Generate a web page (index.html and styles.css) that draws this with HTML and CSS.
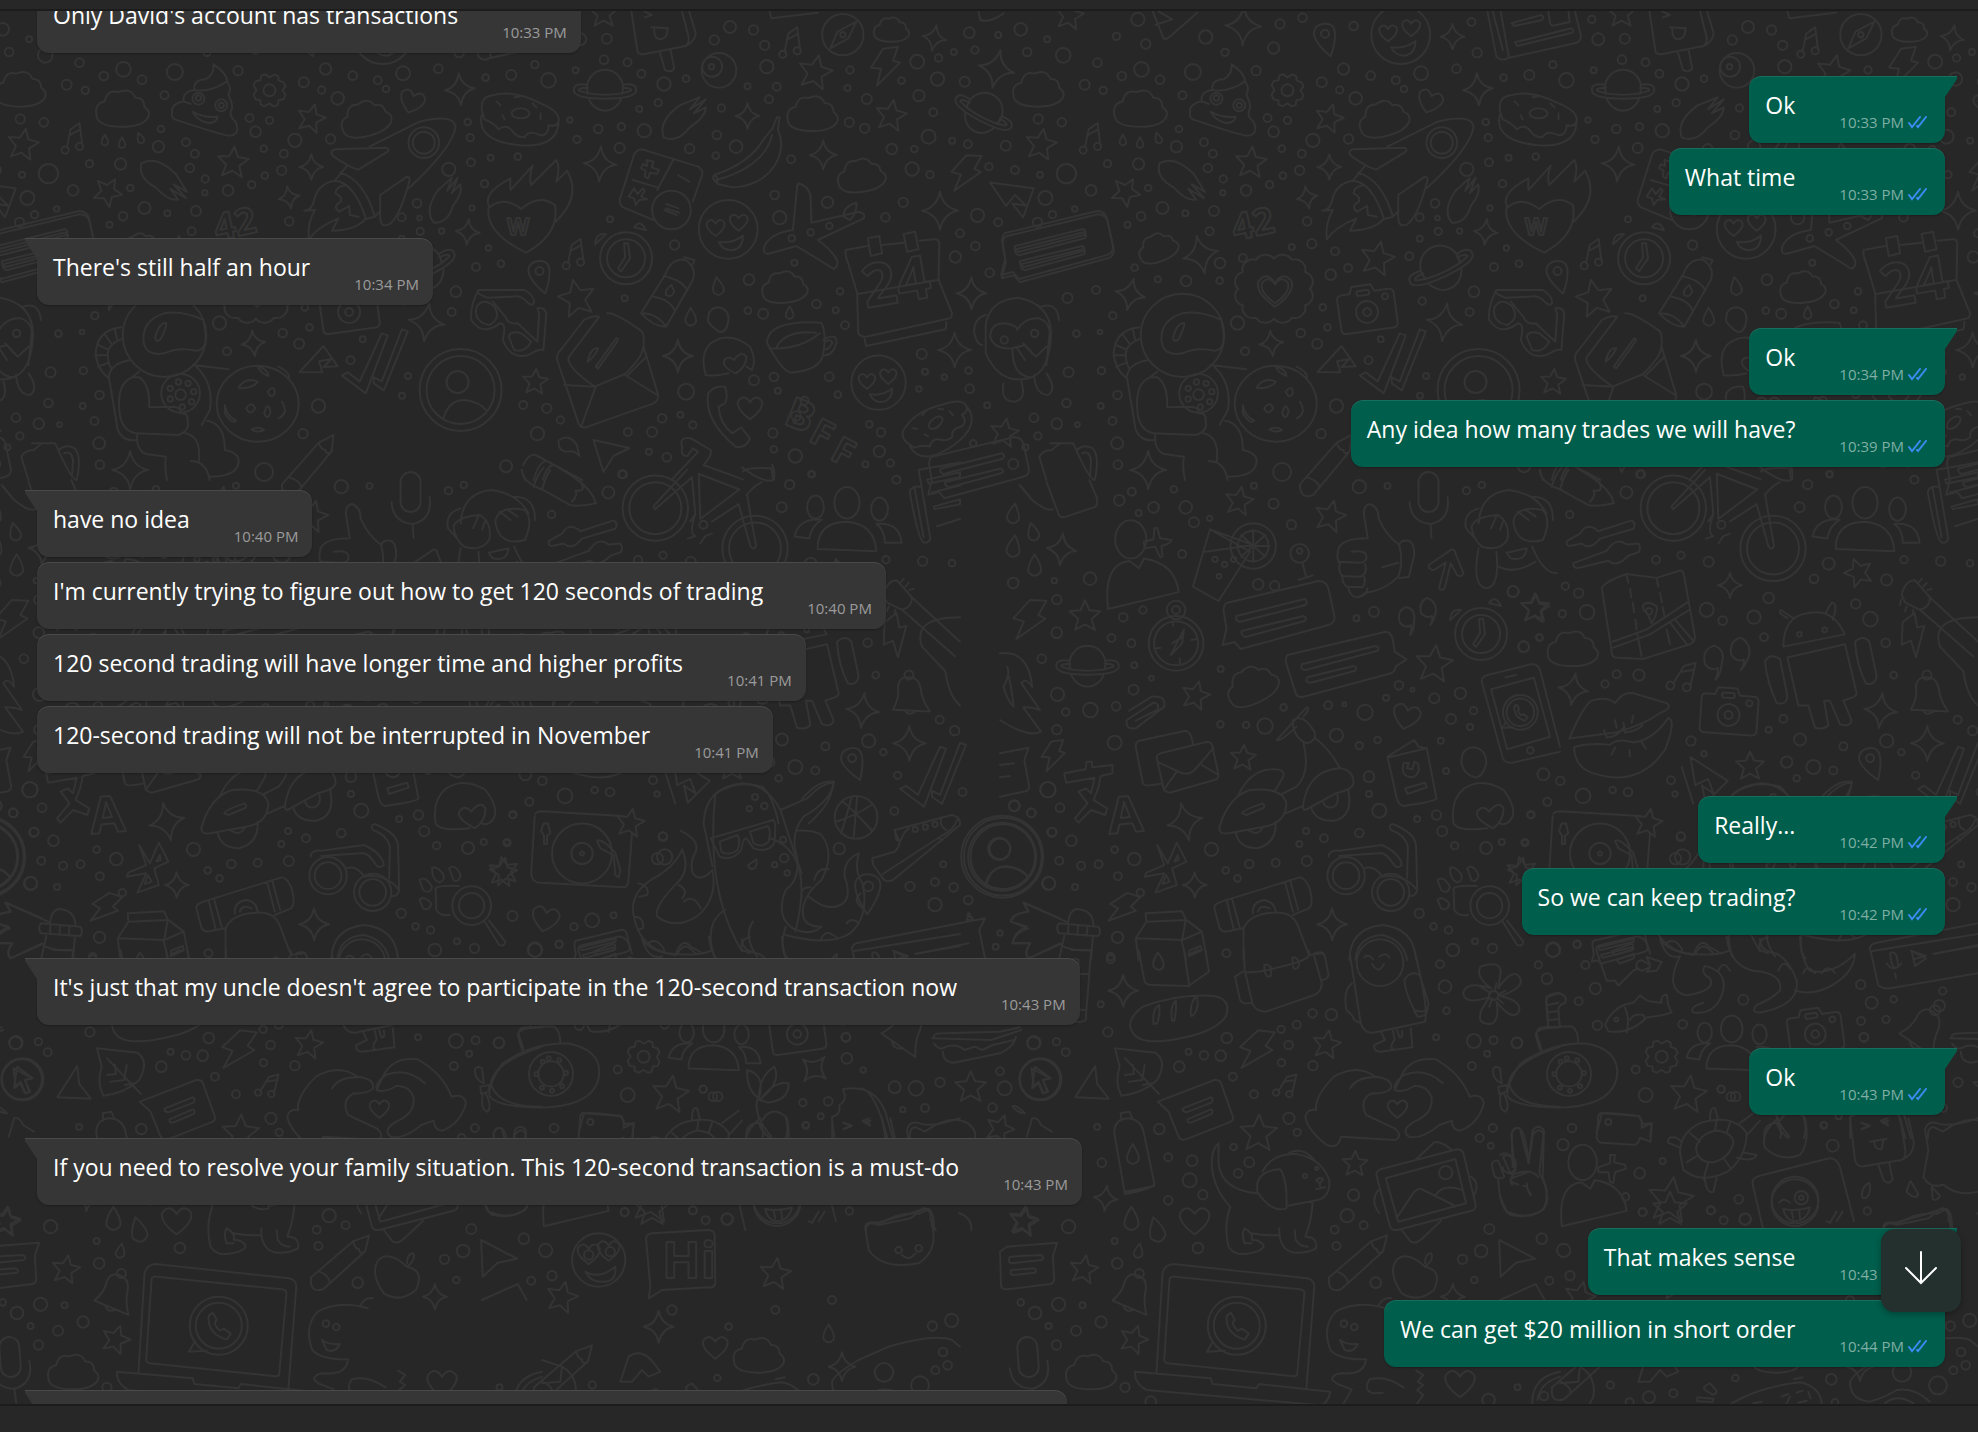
FILE: index.html
```html
<!doctype html>

<html lang="en">
<head>
    <meta charset="utf-8">
    <title>Chat</title>
    <link rel="stylesheet" href="styles.css">
</head>

<body>
    <header class="bar bar-top"></header>

    <main class="chat">
        <svg class="wallpaper" aria-hidden="true">
            <defs>
                <path id="star" d="M0-14L4-5L14-4L6 3L9 13L0 8L-9 13L-6 3L-14-4L-4-5Z"/>
                <path id="sparkle" d="M0-16Q2-3 15 0Q3 2 0 16Q-2 3-15 0Q-3-2 0-16Z"/>
                <path id="cloud" d="M-24 8Q-28-6-17-8Q-14-20-4-17Q8-22 12-12Q21-12 21-3Q28 2 24 8Q18 16 0 16Q-20 16-24 8Z"/>
                <path id="heart" d="M0 12Q-14 2-12-6Q-6-14 0-5Q6-14 12-6Q14 2 0 12Z"/>
                <path id="bolt" d="M-2-18L13-20L8-6L15-4L-8 19L-4 2L-14 1Z"/>
                <path id="drop" d="M0-9Q-7 2-5 6Q0 12 5 6Q7 2 0-9Z"/>
                <g id="note"><path d="M-6 10L-2-10L8-17L11 7M-2-4L9-10"/><circle cx="-8" cy="13" r="4"/><circle cx="8" cy="9" r="4"/></g>
                <g id="pin"><path d="M4 18Q-12 2-11-7Q-9-15 0-15Q10-15 10-5Q10 4 4 18Z"/><circle cy="-5" r="4"/></g>
                <g id="planet"><path d="M-17 3A18 18 0 1 1 17 3M-16 9Q-10 20 0 20Q10 20 16 9M-18-6Q-33-8-31 1Q-28 8 0 8Q28 8 31 1Q33-8 18-6M-17-3Q-27-3-26 0Q-16 4 0 4Q16 4 26 0Q27-3 17-3"/></g>
                <g id="gear"><path d="M-4-16L0-13L5-16L9-14L9-10L14-8L16-4L13 0L16 5L14 9L9 10L8 15L4 16L0 13L-5 16L-9 14L-9 10L-14 9L-16 4L-13 0L-16-5L-14-9L-9-10L-8-15Z"/><circle r="6"/></g>
                <g id="camera"><path d="M-28-14Q-28-18-23-18L-15-18L-12-25L7-25L10-18L24-18Q29-18 29-13L29 16Q29 21 24 21L-23 21Q-28 21-28 16ZM-7-20L4-20Q6-17 4-15L-7-15Q-9-18-7-20Z"/><circle cy="2" r="11"/><circle cy="2" r="4"/><circle cx="20" cy="-11" r="3"/></g>
                <g id="bell"><path d="M-20 8Q-8-2-6-14Q0-26 12-18Q20-14 16 2Q15 12 18 24ZM-8 13Q-6 22 4 18"/><circle cx="10" cy="-22" r="5"/></g>
                <g id="people"><ellipse cy="-20" rx="12" ry="15"/><ellipse cx="-30" cy="-16" rx="8" ry="11"/><ellipse cx="31" cy="-14" rx="8" ry="11"/><path d="M-28 24Q-28-2 0-2Q26 0 28 26ZM-50 12Q-46-6-24-4Q-34 2-36 14ZM52 18Q50-2 28 0Q36 6 36 18Z"/></g>
                <g id="glove"><path d="M-22 20Q-28 4-6-12L14-20L4-8L20-18L8-4L20-10Q20 0 4 10Q-8 26-22 20Z"/></g>
                <g id="clock"><circle r="26"/><circle r="19"/><path d="M-2-15L2-15L4 0L-5 13L-8 10L-1-1ZM-31-14Q-30-26-20-24ZM8-31Q14-40 20-28Z"/></g>
                <g id="speech"><path d="M-52-22L40-44Q48-44 50-36L56-8Q56-2 50 0L-38 24L-44 17L-56 20L-52 4L-55-14Q-55-20-52-22ZM-42-9L26-26Q30-24 27-20L-39-3Q-44-5-42-9ZM-37 6L25-9Q29-7 26-4L-33 12Q-38 10-37 6Z"/></g>
                <g id="plane"><path d="M-22-14L22-12L14 18L2 5L16 6L4-4L-4 8Z"/></g>
                <g id="arrow"><path d="M-18-14L18-6L2 2L-8 18Z"/></g>
                <g id="ticks"><path d="M-32 12L-26 9L-14 18L8-30L14-28L-8 30ZM0 14L8 18L28-34L34-32L10 27L0 20Z"/></g>
                <g id="quotes"><path d="M-5 10Q-10 14-16 8Q-20-4-10-8Q0-6-2 6Q-2 16-6 20Q-4 14-5 10ZM16 1Q10 4 5-2Q2-13 11-17Q20-14 20-4Q18 6 14 10Q17 6 16 1Z"/></g>
                <g id="profile"><circle r="41"/><circle r="34"/><circle cx="-3" cy="-8" r="11"/><path d="M-17 28Q-12 10 4 10Q20 12 26 21"/></g>
                <g id="pencil"><path d="M-28 14L14-22L30-28L26-12L-16 26Q-30 30-28 14ZM-20 8Q-10 12-9 20M14-22Q16-14 20-14Q20-8 26-12"/></g>
                <g id="mic"><rect x="-10" y="-28" width="20" height="40" rx="10"/><path d="M-19 2Q-18 22 2 24L3 38M19-3Q22 20 2 24"/></g>
                <g id="love"><circle r="28"/><use href="#heart" transform="translate(-12 -2) scale(.7)"/><use href="#heart" transform="translate(10 -7) scale(.7)"/><path d="M-9 12Q4 14 14 6Q14 18 4 20Q-6 20-9 12Z"/></g>
                <g id="phone"><circle r="29"/><circle r="23"/><path d="M-24 16L-30 26L-12 25M-10-10Q-12 8 8 14L12 8L5 3L1 5Q-4 0-4-3L-2-6L-6-13Z"/></g>
                <g id="person"><ellipse cx="3" cy="-20" rx="13" ry="16"/><path d="M-16 38Q-20 0 2-2L10 4L14-4Q40 0 43 24Z"/></g>
                <g id="donut"><path d="M-38 0Q-42-16-28-18Q-8-24 20-10Q40-2 38 8Q36 14 28 12Q28 22 20 22Q8 16 4 24Q-4 24-8 18Q-14 10-22 16Q-26 10-36 6ZM-39 2Q-44 28 0 32Q36 34 38 10M-24-12L-20-8M-6-16L0-17M12-10L16-6M-18 2L-16 6M20 0L20 6"/><ellipse rx="9" ry="5"/></g>
                <g id="tick"><path d="M1 7L4 11L12 1M9 10L10 11L18 1"/></g>
                <g id="tile"></g>
            </defs>
            <use href="#tile" x="0"/>
            <use href="#tile" x="-1018"/>
            <use href="#tile" x="1018"/>
        </svg>

        <div class="messages">
            <div class="msg in"><p>Only David's account has transactions</p><time>10:33 PM</time></div>

            <div class="msg out tail"><p>Ok</p><time>10:33 PM</time><svg class="ticks"><use href="#tick"/></svg></div>
            <div class="msg out"><p>What time</p><time>10:33 PM</time><svg class="ticks"><use href="#tick"/></svg></div>

            <div class="msg in tail"><p>There's still half an hour</p><time>10:34 PM</time></div>

            <div class="msg out tail"><p>Ok</p><time>10:34 PM</time><svg class="ticks"><use href="#tick"/></svg></div>
            <div class="msg out"><p>Any idea how many trades we will have?</p><time>10:39 PM</time><svg class="ticks"><use href="#tick"/></svg></div>

            <div class="msg in tail"><p>have no idea</p><time>10:40 PM</time></div>
            <div class="msg in"><p>I'm currently trying to figure out how to get 120 seconds of trading</p><time>10:40 PM</time></div>
            <div class="msg in"><p>120 second trading will have longer time and higher profits</p><time>10:41 PM</time></div>
            <div class="msg in"><p>120-second trading will not be interrupted in November</p><time>10:41 PM</time></div>

            <div class="msg out tail"><p>Really...</p><time>10:42 PM</time><svg class="ticks"><use href="#tick"/></svg></div>
            <div class="msg out"><p>So we can keep trading?</p><time>10:42 PM</time><svg class="ticks"><use href="#tick"/></svg></div>

            <div class="msg in tail"><p>It's just that my uncle doesn't agree to participate in the 120-second transaction now</p><time>10:43 PM</time></div>

            <div class="msg out tail"><p>Ok</p><time>10:43 PM</time><svg class="ticks"><use href="#tick"/></svg></div>

            <div class="msg in tail"><p>If you need to resolve your family situation. This 120-second transaction is a must-do</p><time>10:43 PM</time></div>

            <div class="msg out tail"><p>That makes sense</p><time>10:43 PM</time><svg class="ticks"><use href="#tick"/></svg></div>
            <div class="msg out"><p>We can get $20 million in short order</p><time>10:44 PM</time><svg class="ticks"><use href="#tick"/></svg></div>

            <div class="msg in tail wide"></div>
        </div>

        <button class="to-bottom" type="button" aria-label="Scroll to bottom">
            <svg width="32" height="34" viewBox="0 0 32 34"><path d="M16 1V32M1 17L16 32L31 17"/></svg>
        </button>
    </main>

    <footer class="bar bar-bottom"></footer>

    <script src="wallpaper.js"></script>
</body>
</html>
```
FILE: styles.css
```css
* {
    box-sizing: border-box;
}
body {
    margin: 0;
    height: 100vh;
    display: flex;
    flex-direction: column;
    overflow: hidden;
    background: #272727;
    color: #fff;
    font-family: "Open Sans", "Noto Sans", sans-serif;
}
.bar {
    flex: none;
    background: #272727;
}
.bar-top {
    height: 11px;
    border-bottom: 2px solid #1c1c1c;
}
.bar-bottom {
    height: 28px;
    border-top: 2px solid #1c1c1c;
}
.chat {
    position: relative;
    flex: 1;
    min-height: 0;
    overflow: hidden;
}
.wallpaper {
    position: absolute;
    top: -11px;
    left: 0;
    width: 100%;
    height: 1432px;
    fill: none;
    stroke: #343434;
    stroke-width: 2;
    stroke-linecap: round;
    stroke-linejoin: round;
    font: bold 46px "Open Sans", sans-serif;
}
.wallpaper * {
    vector-effect: non-scaling-stroke;
}
.messages {
    position: relative;
    display: flex;
    flex-direction: column;
    gap: 5px;
    margin-top: -25px;
    padding: 0 33px 0 37px;
}
.msg {
    position: relative;
    flex: none;
    display: flex;
    align-items: flex-start;
    height: 67px;
    padding: 12px 14px 0 16px;
    border-radius: 12px;
    box-shadow: inset 0 1px rgba(255, 255, 255, 0.1), 0 1px 2px rgba(0, 0, 0, 0.25);
}
.msg p {
    margin: 0;
    font-size: 23px;
    line-height: 34px;
    white-space: nowrap;
}
.msg time {
    margin: 22px 0 0 44px;
    font-size: 15px;
    line-height: 24px;
    white-space: nowrap;
    color: #9b9b9b;
}
.in {
    align-self: flex-start;
    background: #363636;
}
.out {
    align-self: flex-end;
    padding-right: 17px;
    background: #005e4c;
}
.out time {
    color: #7fafa5;
}
.in + .out,
.out + .in {
    margin-top: 18px;
}
/* little corner next to the first message of a group */
.tail::before {
    content: "";
    position: absolute;
    top: 0;
    width: 24px;
    height: 20px;
    background: inherit;
    border-top: 1px solid rgba(255, 255, 255, 0.1);
}
.in.tail::before {
    left: -12px;
    clip-path: polygon(0 0, 100% 0, 100% 50%, 12px 100%, 0 3px);
}
.out.tail::before {
    right: -12px;
    clip-path: polygon(0 0, 100% 0, 100% 3px, 12px 100%, 0 50%);
}
.in.tail {
    border-top-left-radius: 0;
}
.out.tail {
    border-top-right-radius: 0;
}
.wide {
    width: 54%;
}
.ticks {
    width: 20px;
    height: 13px;
    margin: 28px 0 0 4px;
    fill: none;
    stroke: #3a8cf0;
    stroke-width: 2;
    stroke-linecap: round;
}
.to-bottom {
    position: absolute;
    right: 17px;
    bottom: 92px;
    width: 80px;
    height: 83px;
    padding: 0;
    border: 0;
    border-radius: 14px;
    background: #24302d;
    box-shadow: 0 2px 6px rgba(0, 0, 0, 0.3);
}
.to-bottom svg {
    display: block;
    margin: -6px auto 0;
    fill: none;
    stroke: #fff;
    stroke-width: 2;
    stroke-linecap: round;
}
```
FILE: wallpaper.js
```js
// Fills the #tile group of the chat wallpaper. Every sheet has its own
// origin and scale, so its doodles are written in local units.
var NS = "http://www.w3.org/2000/svg";
var tile = document.getElementById("tile");

function add(tag, attrs, text) {
    var el = document.createElementNS(NS, tag);
    for (var name in attrs) el.setAttribute(name, attrs[name]);
    if (text) el.textContent = text;
    tile.appendChild(el);
}

function sheet(ox, oy, kx, ky, data) {
    data.dots.trim().split(/\s+/).forEach(function(dot) {
        var d = dot.split(",");
        add("circle", { cx: ox + d[0] / kx, cy: oy + d[1] / ky, r: (d[2] || 12) / 3 });
    });
    data.marks.forEach(function(m) {
        add("use", {
            href: "#" + m[0],
            transform: "translate(" + (ox + m[1] / kx) + " " + (oy + m[2] / ky) + ") rotate(" + (m[4] || 0) + ") scale(" + (m[3] || 1) + ")"
        });
    });
    data.lines.forEach(function(line) {
        add("path", { d: line, transform: "translate(" + ox + " " + oy + ") scale(" + 1 / kx + " " + 1 / ky + ")" });
    });
    (data.words || []).forEach(function(w) {
        add("text", { transform: "translate(" + (ox + w[1] / kx) + " " + (oy + w[2] / ky) + ") rotate(" + (w[4] || 0) + ") scale(" + w[3] + ")" }, w[0]);
    });
}

// top left: rocket, astronaut, planet
sheet(32, 0, 2.8, 3, {
    dots: "246,58,20 186,109,11 268,132,14 436,111,20 490,157,11 644,72,14 707,53,13 626,144,17 850,78,13 1180,66,12 1196,158,14 1517,58,11 1535,118,18 37,166,22 133,188,13 201,228,13 256,208,22 308,239,13 97,254,15 149,271,11 400,216,24 371,286,12 577,212,14 761,247,15 811,270,11 856,295,19 822,207,17 898,227,13 968,241,12 991,267,10 1039,220,21 1138,206,13 1270,233,10 1342,225,15 1408,194,11 1446,241,22 1522,211,9 33,367,13 361,387,10 431,427,12 354,440,17 456,461,12 442,504,13 161,491,11 248,492,17 46,521,29 115,571,16 275,564,10 609,354,12 665,361,11 626,395,16 736,421,20 649,446,10 705,461,12 836,417,14 699,511,14 652,527,10 615,554,11 549,571,16 485,537,11 484,578,8 1220,366,10 1227,413,11 1229,487,12 1284,473,9 1360,470,10 1506,360,8 1526,418,11 1167,508,20 1267,551,11 1232,624,8 1078,610,13 1035,652,12 1085,654,7 1087,694,11 1147,693,8 1035,716,9 69,627,8 7,644,11 255,649,13 315,624,18 379,640,9 459,633,15 217,674,9 447,694,12 720,664,13 677,741,9 733,731,14 798,754,12 476,789,16 540,774,12 475,842,10 237,803,10 302,838,9 381,843,16 129,870,12 49,894,15 176,947,11 74,1001,10 140,996,7 52,1117,15 144,1112,11 189,1185,13 46,1209,13 142,1218,9 175,1263,12 77,1274,7 19,1271,16 188,1330,18 190,1394,13 1006,769,12 835,804,12 786,824,16 764,922,10 777,982,10 702,999,13 748,1031,15 546,1054,12 525,969,20 926,1018,9 892,1081,12 1042,903,11 1187,875,16 1175,936,12 1278,744,8 1243,801,12 1313,791,10 1053,1128,9 1036,1187,9 802,1218,20 759,1301,14 650,1416,27 1097,428,46 1097,428,33 466,296,18 530,316,18 466,294,8 530,316,8 416,1180,58 416,1184,16 387,1165,8 410,1146,8 437,1150,8 453,1175,8 447,1205,8 421,1221,8 387,1197,8",
    marks: [
        ["star", 55, 45, 1, 10], ["star", 563, 486, 1.1, 5], ["star", 213, 574, 1, 30], ["star", 782, 354, 1, 15], ["star", 917, 774, 1.2, 12], ["star", 1409, 1144, 0.9, 5], ["star", 1525, 893, 1.3, -12],
        ["sparkle", 541, 78, 1.2, 2], ["sparkle", 1127, 110, 0.8], ["sparkle", 782, 501, 0.8], ["sparkle", 720, 592, 0.7, -10], ["sparkle", 1198, 268, 1, -4], ["sparkle", 422, 764, 1.2, -12], ["sparkle", 225, 883, 1, 12], ["sparkle", 620, 1030, 0.8, -6], ["sparkle", 1105, 967, 1.2, 8], ["sparkle", 1220, 696, 0.8, 5], ["sparkle", 275, 1410, 1.2],
        ["heart", 1064, 303, 1, 18], ["cloud", 253, 330, 1.05], ["cloud", 935, 360, 1, -15], ["cloud", 303, 746, 0.8, -20], ["note", 113, 415, 0.9], ["note", 1516, 762, 0.9], ["pin", 771, 116, 1, -4], ["pin", 1422, 828, 1, -4],
        ["glove", 372, 545, 1, 80], ["glove", 1160, 597, 0.9, -20], ["gear", 665, 271], ["planet", 1096, 805, 1.1, -25], ["camera", 887, 930, 1, -8], ["profile", 1200, 1170], ["ticks", 957, 1090, 1], ["plane", 805, 1097, 0.8, -50], ["love", 982, 104, 1.05], ["heart", 630, 870, 1.4], ["heart", 630, 870, 1.1],
        ["drop", 204, 420, 0.6], ["drop", 252, 428, 0.6], ["drop", 303, 414, 0.6, -20], ["donut", 1368, 340, 1], ["speech", 20, 765, 1, 0], ["pencil", 772, 1400, 1, -8]
    ],
    lines: [
        "M392 340Q388 312 425 304Q420 275 455 270Q450 240 486 238Q512 222 508 193Q548 222 546 245Q560 262 550 285Q562 310 560 325Q548 348 570 365Q585 405 552 407Q530 405 400 358Q390 352 392 340ZM450 335Q480 355 520 350Q515 372 490 368Q460 360 450 335ZM455 270Q500 278 545 245M425 304L445 312",
        "M945 440L1085 365Q1180 340 1186 380Q1180 440 1055 565M838 460Q838 450 850 448L990 443Q1002 445 996 455L915 508Q905 512 845 470ZM880 500L848 542Q800 550 790 600Q785 630 762 632L792 630Q770 670 775 718Q800 680 858 655L840 692Q910 690 935 655M863 518Q930 540 960 650L935 657M960 650L974 635M880 555Q850 560 850 580Q870 590 865 605Q840 620 860 635L888 618L890 645L915 650M975 585L1050 530Q1060 530 1056 545Q1030 650 1000 673Q975 685 975 650ZM848 542Q900 545 935 655",
        "M1280 620Q1260 580 1340 535Q1338 560 1340 570L1402 497Q1390 530 1398 555L1468 480Q1480 500 1468 545L1498 512Q1540 590 1466 665M1384 758Q1270 700 1278 625Q1320 585 1370 627Q1420 580 1464 615Q1480 700 1384 758Z",
        "M727 866A30 30 0 0 1 714 916A30 30 0 0 1 677 953A30 30 0 0 1 627 956A30 30 0 0 1 577 953A30 30 0 0 1 540 916A30 30 0 0 1 527 866A30 30 0 0 1 540 816A30 30 0 0 1 577 779A30 30 0 0 1 627 776A30 30 0 0 1 677 779A30 30 0 0 1 714 816A30 30 0 0 1 727 866",
        "M488 1006A117 125 0 1 1 254 1006A117 125 0 1 1 488 1006ZM480 960Q420 930 370 940Q310 960 312 1020Q315 1070 370 1060Q410 1040 460 1052Q490 1050 486 1000ZM345 1010Q355 970 375 968Q380 975 360 1018Q345 1030 345 1010Z",
        "M250 982Q180 990 178 1065Q185 1110 212 1132M255 1015Q215 1030 212 1060Q212 1090 222 1105M232 988L238 1018M205 1005L222 1030M185 1035L212 1048M178 1065L210 1066M185 1100L215 1088",
        "M215 1130Q220 1090 275 1080M215 1130L240 1290Q255 1325 290 1320M450 1095L550 1108M460 1100Q510 1150 498 1230L475 1275M300 1115L280 1132Q240 1150 244 1220Q245 1290 290 1300L410 1305Q445 1290 435 1260Q440 1240 415 1240Q420 1225 400 1220L328 1222Q330 1150 300 1132L280 1132M295 1300Q290 1350 320 1362L375 1370Q370 1400 378 1440M430 1300Q475 1310 467 1385M490 1262Q540 1270 540 1350Q590 1360 575 1400Q560 1430 497 1430M445 1383Q490 1385 497 1440",
        "M747 1210A115 115 0 0 1 632 1325A115 115 0 0 1 517 1210A115 115 0 0 1 632 1097A115 115 0 0 1 747 1210ZM580 1160Q600 1130 632 1145Q620 1165 580 1165ZM660 1175Q680 1150 680 1180Q670 1200 660 1175ZM600 1225Q615 1200 625 1225Q610 1250 600 1225ZM650 1240Q660 1200 668 1235Q660 1265 650 1240ZM540 1215Q545 1250 572 1262Q560 1275 540 1240ZM700 1205Q720 1240 690 1255M615 1288Q635 1278 650 1290Q630 1300 615 1288ZM632 1100Q660 1105 662 1128Q640 1120 632 1100ZM690 1100Q720 1115 720 1132",
        "M1250 870L1380 870Q1410 890 1405 910Q1400 920 1385 905Q1370 885 1340 890L1275 893Q1240 880 1250 870ZM1250 870Q1225 920 1230 960Q1260 1010 1310 970Q1330 970 1318 1020Q1340 1080 1390 1065Q1420 1045 1432 1050L1440 940Q1435 920 1415 925L1420 940L1415 1025L1360 970Q1335 975 1325 950L1290 905M1245 920Q1235 965 1280 975Q1315 955 1295 920Q1265 890 1245 920ZM1335 1010Q1340 990 1370 1000L1398 1025Q1380 1060 1350 1050Z",
        "M288 35L318 115Q325 120 335 110L412 38M295 75L342 58L305 35",
        "M1225 35L1250 170Q1265 185 1280 175L1475 128Q1490 120 1485 100L1470 35M1240 35L1268 150M1262 35L1285 172M1292 70L1375 45Q1385 50 1378 60L1300 78ZM1302 127L1460 85Q1470 90 1462 98L1308 138ZM1395 35L1400 70Q1405 80 1415 76L1455 66L1452 35",
        "M0 1330L65 1330Q110 1440 125 1440M75 1350Q95 1330 120 1345Q140 1370 125 1440M90 1360Q110 1350 115 1380L112 1430"
    ],
    words: [["42", 518, 722, 0.8, -12], ["W", 1330, 704, 0.5, 0]]
});

// top right: calendar, envelope, monkey
sheet(500, 0, 2.8, 3, {
    dots: "644,81,18 600,120,14 710,90,14 741,136,14 299,116,15 291,179,13 357,187,12 396,221,12 459,252,20 521,236,10 443,308,11 390,327,9 747,200,20 693,259,9 775,260,12 753,298,12 620,324,11 980,210,11 973,264,9 1168,185,21 1228,174,11 1271,156,9 1330,150,11 1395,105,9 1314,98,16 1458,88,19 1532,118,9 1476,156,13 1225,237,20 1301,245,15 1124,242,10 1027,297,15 1173,287,17 1213,337,12 978,367,14 1021,385,14 404,392,20 340,380,11 275,387,13 335,444,15 607,405,13 604,467,10 661,440,19 531,446,14 815,478,12 1200,410,21 1266,422,9 1310,433,12 1416,437,15 1097,447,16 1160,447,10 1154,507,20 1204,524,11 1369,500,11 1442,510,12 1512,524,9 1507,357,14 769,585,13 917,607,17 783,653,20 1129,607,14 1079,652,13 1337,646,20 1395,667,12 1505,667,14 1527,594,21 1288,700,12 1331,738,13 1275,771,17 1371,818,13 308,658,9 489,735,14 824,788,9 697,839,16 952,874,10 886,912,13 940,931,9 966,976,12 737,941,15 694,932,10 349,895,9 521,1175,24 711,1141,15 767,1131,13 778,1172,9 922,1130,13 946,1184,10 1181,1062,15 1190,1115,9 1244,1131,8 1312,1112,10 1315,1166,13 1173,1167,8 1364,1216,9 1495,1253,13 1506,1308,11 1471,1342,9 1325,1330,10 505,1244,9 454,1255,13 540,1275,11 426,1296,15 358,1296,12 467,1372,13 417,1355,9 342,1423,12 105,1301,20 131,1225,14 65,1215,12 169,1260,11 764,1299,14 767,1348,10 827,1368,20 872,1423,9 1034,1273,10 1067,1297,13 1062,1354,17 1023,1393,9 1093,1389,11 1437,1392,15 17,1399,18 613,211,52 594,200,30 592,200,8 960,104,62 960,104,8 480,630,58 870,697,10 922,678,10 817,715,10 853,1202,12 829,1248,14 1412,1020,11 1497,1000,11",
    marks: [
        ["star", 883, 215, 1.2, 12], ["star", 1095, 345, 1.1, 10], ["star", 1515, 432, 1.1, 10], ["star", 1412, 1297, 1, 10], ["star", 290, 38, 1],
        ["sparkle", 693, 348, 0.8], ["sparkle", 1216, 114, 0.8, 10], ["sparkle", 1390, 207, 1.2, 12], ["sparkle", 905, 465, 0.9], ["sparkle", 280, 492, 1.1, 3], ["sparkle", 1232, 632, 1.2], ["sparkle", 1320, 880, 1], ["sparkle", 1273, 1050, 1.1], ["sparkle", 498, 1068, 1],
        ["cloud", 875, 345, 1], ["cloud", 1012, 530, 0.95, -8], ["cloud", 797, 865, 0.9, -5], ["cloud", 1096, 92, 0.7], ["cloud", 1507, 272, 1], ["bolt", 1078, 200, 1], ["bolt", 1303, 520, 1, 10], ["note", 812, 128, 0.9],
        ["planet", 294, 272, 1], ["planet", 1353, 340, 1, 28], ["glove", 520, 352, 1], ["love", 639, 688, 1.05], ["love", 1060, 1148, 0.97], ["clock", 353, 775, 1], ["heart", 700, 1222, 1], ["plane", 1430, 595, 1, 5], ["arrow", 312, 1362, 1], ["donut", 1220, 1268, 0.9, -40], ["speech", 1562, 775, 1], ["speech", 1340, 1430, 0.9],
        ["drop", 610, 858, 1, -10], ["drop", 534, 950, 1], ["drop", 811, 938, 0.7]
    ],
    lines: [
        "M368 35L385 155Q390 165 405 162L520 138Q530 130 528 110L510 35M530 35L548 100Q545 125 520 138M448 158L462 210Q480 220 488 205L478 152M405 35L425 45L405 52M425 82L470 85M432 85Q430 118 450 118Q472 112 468 84",
        "M925 145L945 95L998 65L975 115Z",
        "M775 352L783 352L778 388Q800 440 770 495Q730 560 650 562L610 552Q590 535 600 525Q700 490 740 415L763 385ZM605 540Q740 500 762 405M600 525Q612 530 608 548",
        "M398 448Q380 450 375 465L335 600Q335 615 345 622L430 660M398 448L555 500Q570 510 566 525L540 605M485 480L440 570M372 540L440 562M410 480L430 485L425 502L445 510L440 522L420 518L415 535L405 530L408 512L395 505L400 492L412 498ZM375 565L385 582L400 565L405 572L395 590L412 598L390 600L380 615L375 595L360 590ZM498 525L530 545M465 612L500 625M460 630L495 645M465 625L502 638",
        "M500 780Q520 775 530 790Q550 810 540 840L465 980Q430 980 395 940L462 825Q475 785 500 780ZM515 772L545 780L540 792M458 828Q510 840 525 872M430 890Q480 900 490 935M395 940Q440 940 465 980M480 855Q460 870 465 885Q480 895 488 875Z",
        "M835 550Q870 560 870 600L872 668L1005 635Q1025 640 1018 655L890 720Q935 755 945 785Q945 800 935 807L830 738L750 762Q735 760 740 740Q755 700 820 690L832 560ZM962 650Q960 620 998 608Q1000 640 980 660Z",
        "M968 750Q965 765 975 790L1000 880L1003 1000Q1010 1012 1025 1010L1260 955Q1270 945 1262 930L1228 840L1230 730Q1228 715 1215 718L1175 722M968 750L1028 738M1070 735L1130 728M1002 882L1225 840M1030 715L1062 708L1070 760L1038 768ZM1130 702L1162 695L1172 748L1140 755ZM1020 1012L1025 1038L1248 988L1250 965",
        "M300 940Q320 935 395 992Q405 1000 402 1040L443 1185Q445 1200 430 1210L240 1282Q225 1285 220 1270L160 1080Q158 1060 170 1050L235 960Q260 945 278 950M278 950L192 1072Q185 1100 265 1160L350 1122Q400 1070 400 1045M180 1155L268 1160L228 1278M350 1125L440 1185M245 1085Q255 1040 275 1045Q265 1070 245 1085ZM268 1100L325 1015Q335 1015 325 1030L275 1105ZM410 1070L358 1125",
        "M748 1020Q760 960 900 968Q915 1000 905 1060Q900 1110 815 1118Q790 1115 748 1030ZM755 1045Q840 1050 895 1000M775 1040Q800 990 885 998M905 1020Q945 995 942 1030Q930 1070 905 1065M912 1025Q930 1015 930 1030Q920 1050 910 1048",
        "M575 1120Q560 1060 590 1030Q640 990 700 1040Q720 1080 705 1110L690 1100M575 1125Q600 1130 640 1120M660 1120Q620 1100 628 1080Q640 1065 655 1080Q675 1050 690 1070Q690 1100 660 1120M583 965Q580 925 610 922Q640 925 640 960Q635 995 618 997Q600 990 583 965Z",
        "M583 1180Q600 1155 630 1160Q640 1190 630 1210L612 1220Q615 1270 650 1300L675 1282L700 1315Q690 1345 660 1340Q570 1260 583 1180Z",
        "M1360 975Q1370 900 1450 893Q1540 910 1543 1000Q1540 1120 1480 1135Q1400 1155 1360 1060ZM1372 1010Q1375 970 1410 970Q1450 975 1448 990Q1470 950 1510 955Q1545 970 1538 1010L1530 1095M1372 1010Q1385 1050 1435 1045L1470 1035L1500 1070L1530 1040M1360 945Q1325 955 1328 1000Q1335 1035 1350 1035M1435 1050Q1435 1130 1490 1132M1445 1040L1470 1080M1465 1030L1490 1060M1410 1150Q1400 1205 1440 1205Q1475 1200 1460 1145M1495 1125Q1500 1185 1535 1185Q1560 1165 1530 1120M1515 920Q1560 905 1565 960",
        "M510 1340Q500 1310 535 1315L590 1350Q595 1365 570 1395L680 1438M510 1340Q505 1370 525 1368L540 1345L555 1355L480 1440M680 1415Q690 1400 760 1405L765 1440M65 1395Q80 1360 100 1365L230 1440M60 1410L70 1440M95 1440Q105 1390 130 1382M120 1440Q130 1400 148 1395M165 1320Q195 1300 215 1335L222 1368Q210 1350 185 1355Q160 1350 165 1320Z",
        "M755 35L760 55L890 38M1340 35L1345 60Q1370 70 1410 40M1510 1370Q1520 1350 1545 1350L1568 1330M1510 1370L1530 1440"
    ],
    words: [["24", 1025, 925, 1.3, -10], ["B", 790, 1270, 0.9, 22], ["F", 860, 1320, 0.8, 28], ["F", 920, 1375, 0.8, 28]]
});

// middle left: speech bubbles, scooter, glasses
sheet(-18, 480, 2.8, 3, {
    dots: "334,61,16 369,35,12 388,99,9 430,82,16 487,28,10 520,82,19 543,127,15 587,115,8 711,17,9 766,71,15 816,134,14 1006,20,20 1085,18,9 1306,32,11 1349,15,10 510,222,12 252,296,19 152,302,8 37,309,16 159,359,14 400,390,11 345,412,13 312,474,12 368,490,12 159,458,16 117,536,13 376,556,9 424,595,7 374,629,15 325,679,13 161,643,20 184,696,11 253,690,22 159,749,14 321,788,21 618,567,9 617,733,10 689,735,10 742,738,23 794,682,10 723,313,16 769,317,14 998,415,9 1047,395,15 1437,334,16 1466,500,16 1511,473,10 1117,616,13 1155,629,6 1081,653,9 1022,697,23 1216,655,15 1289,640,17 1326,692,11 1263,717,15 1316,741,9 919,676,12 964,673,6 1057,780,10 1006,797,11 942,766,20 1234,782,9 1033,890,16 1249,873,9 1033,942,9 1062,992,21 1168,1017,9 1222,1005,14 1238,1054,15 1273,1097,11 1361,1104,18 1405,1086,9 1470,1087,8 1486,1005,10 907,1075,12 838,1092,9 857,1053,9 1006,1059,13 859,1143,15 772,1148,12 698,1152,13 665,1195,10 632,1171,10 592,1108,20 134,929,23 40,977,16 88,999,13 168,983,13 146,1056,13 200,1082,16 321,1109,10 376,1137,19 276,1153,12 227,1157,12 166,1142,12 330,1189,12 137,1210,19 210,1221,9 393,1238,11 329,1372,17 310,1430,11 634,1420,12 1174,1300,14 1214,1339,10 1256,1350,11 1330,1384,9 1379,1405,14 1268,1410,19 493,490,82 493,490,66 493,390,28 493,390,12 709,198,68 709,198,46 839,220,28 839,213,8 602,238,8 629,253,8 654,238,8 613,289,7 969,1187,56 969,1187,40 1094,1237,56 1094,1237,40 1371,1277,58 1371,1277,38 1485,811,10",
    marks: [
        ["star", 670, 62, 1, 10], ["star", 925, 107, 1.1, 14], ["star", 238, 407, 1.1], ["star", 548, 645, 1, 14], ["star", 1216, 550, 1.3, 6], ["star", 1498, 385, 1, 6], ["star", 681, 832, 0.9, 4], ["star", 1462, 1172, 1, -12],
        ["sparkle", 172, 208, 1, 6], ["sparkle", 518, 1025, 1.2, -12], ["sparkle", 545, 1215, 0.8], ["sparkle", 930, 1333, 1], ["heart", 1138, 708, 1.1, 14], ["planet", 245, 560, 1], ["bolt", 80, 420, 1.1, 10], ["bolt", 148, 828, 0.8], ["bolt", 342, 1285, 0.9, 25],
        ["cloud", 707, 620, 1.05, -25], ["clock", 1347, 462, 1], ["quotes", 1165, 405, 1], ["person", 356, 250, 1.2], ["speech", 780, 435, 1], ["profile", 8, 1130, 0.95], ["phone", 1457, 697, 0.6], ["mic", 1200, 60, 1], ["drop", 38, 100, 1.1, 8], ["drop", 92, 155, 1, -14], ["drop", 38, 198, 1.2, 8], ["drop", 97, 255, 1.2]
    ],
    lines: [
        "M1035 72Q1060 80 1060 115Q1080 165 1118 195Q1130 250 1115 290Q1080 330 1020 340M1035 72Q1015 78 1020 110L1030 175Q960 175 948 205Q940 240 952 250Q945 275 960 288Q955 310 975 322Q980 350 1000 352Q1030 345 1028 325M950 245L1010 248Q1030 245 1025 225Q1020 210 985 215M955 288L1010 290Q1030 280 1022 252M970 320L1015 322Q1025 310 1020 290M1118 195Q1120 180 1145 182Q1160 190 1160 225L1145 290L1118 295M1070 262L1115 248",
        "M1200 255L1265 208Q1275 210 1275 220L1298 280Q1290 295 1280 285L1262 250L1245 325Q1230 335 1230 322L1248 248L1215 270Q1200 270 1200 255Z",
        "M1340 130Q1345 40 1425 30Q1500 40 1530 100M1320 140Q1330 110 1395 105Q1430 130 1420 180Q1400 215 1350 200Q1325 180 1320 140ZM1438 120Q1450 75 1520 90Q1545 120 1520 180Q1450 200 1438 130ZM1375 145L1390 108M1400 150L1410 120M1480 120L1450 95M1500 110L1470 88M1418 218L1475 205Q1470 245 1430 235ZM1340 205Q1320 320 1362 325Q1400 320 1390 215M1395 260Q1440 285 1500 245M1490 200Q1520 280 1560 280M1340 85Q1295 100 1305 145L1330 175M1490 50Q1550 50 1548 120",
        "M588 148L540 320L612 363L700 215ZM588 148L710 195L570 216M709 150L709 246M663 198L755 198M675 165L743 230M743 165L675 230M847 248L857 290M836 300L876 286",
        "M55 15L90 60Q130 95 148 88M130 5L165 105Q170 115 185 110L268 80Q275 70 270 50L250 0M402 185L430 178L432 145Q440 140 442 150L448 175L480 180Q480 190 452 198L455 228Q448 235 445 225L435 200L405 205Z",
        "M805 525L1080 455Q1095 455 1100 480L1105 515L1138 538L1108 560Q1105 575 1095 580L845 652Q830 650 828 640L800 545Q800 530 805 525ZM845 553L1050 498Q1065 500 1058 512L855 570Q840 570 845 553ZM860 592L990 558Q1002 560 995 572L870 608Q852 608 860 592Z",
        "M362 692L425 650Q465 645 460 680L380 745Q350 750 355 720L430 668Q450 670 440 690L380 722M478 525L515 448L510 490ZM483 425L485 438M503 535L504 550M438 505L450 503M536 480L550 477M482 490L512 470",
        "M380 800Q380 785 390 782L520 752Q535 755 540 790M380 800L400 910Q405 922 455 910M440 840Q435 825 450 820L580 785Q592 785 595 800L612 885Q612 898 600 900L475 938Q460 935 458 925ZM440 845L510 880Q530 885 545 870L597 805M458 930L495 875M612 885L565 855",
        "M640 1060Q610 1065 615 1040Q640 950 700 930Q790 920 802 970Q800 1030 740 1040ZM665 950Q700 870 760 868Q800 865 793 890L770 932M850 790Q870 880 830 920L790 942M880 772Q925 810 952 865Q990 870 990 910Q985 930 940 940L855 990Q840 990 860 930Q885 870 950 865M800 1000L848 978M820 720Q820 775 860 790Q890 780 880 755Q850 700 820 720ZM775 780L858 682Q870 685 850 710M775 780Q785 785 830 740M678 1000Q680 990 735 970Q745 980 735 985L690 1005ZM660 1060Q670 1105 720 1105Q775 1090 772 1025M695 1050Q720 1070 735 1045M872 985Q885 1025 935 1022Q990 1010 975 930M905 965Q910 985 930 982Q950 975 945 945",
        "M1085 830L1160 780L1172 800L1195 805L1222 955Q1220 965 1130 978Q1115 975 1110 950ZM1090 832L1195 805M1130 850Q1120 890 1155 892Q1180 880 1170 850L1160 845L1155 868L1140 865L1145 848ZM1135 925L1190 908L1195 922L1140 942Z",
        "M1270 1030Q1260 960 1300 925Q1350 890 1410 930Q1445 980 1435 1010Q1420 1040 1400 1030M1270 1030Q1280 1055 1365 1045M1380 1045Q1320 1010 1340 990Q1355 975 1370 995Q1395 960 1410 985Q1410 1025 1380 1045ZM1292 850Q1290 805 1325 802Q1360 805 1362 850Q1350 895 1330 892Q1300 885 1292 850Z",
        "M1350 610Q1345 590 1365 585L1485 553Q1505 550 1512 570L1568 800M1350 610L1408 835Q1415 850 1435 848L1568 815M1375 628L1495 593L1540 770L1420 808ZM1415 592L1445 585",
        "M920 1130Q920 1110 950 1112L1070 1095Q1120 1120 1125 1155Q1110 1170 1100 1150Q1080 1115 1060 1120L950 1128M1020 1165Q1050 1155 1070 1190Q1130 1180 1168 1230Q1165 1250 1145 1248M1140 1195L1142 1100Q1135 1065 1095 1050Q1085 1035 1100 1032Q1165 1060 1165 1100L1168 1230",
        "M1270 1225Q1280 1215 1335 1218M1270 1225L1272 1290Q1285 1310 1310 1305M1408 1325L1448 1395Q1465 1400 1465 1385L1420 1322M1260 1165Q1270 1155 1290 1180Q1300 1200 1280 1208Q1260 1200 1260 1165ZM1308 1165Q1325 1150 1340 1185Q1335 1210 1320 1200ZM1225 1200Q1240 1185 1260 1220Q1255 1245 1235 1230ZM1225 1260Q1235 1245 1258 1270Q1255 1295 1235 1285Z",
        "M600 1285Q600 1270 620 1265L830 1195Q850 1185 865 1220Q880 1270 865 1285L820 1305M600 1285L615 1345Q625 1360 645 1352L680 1345M635 1262L655 1350M650 1258L672 1345M798 1205L820 1295M812 1200L835 1290M708 1300Q705 1265 740 1260Q770 1265 772 1298M722 1295Q728 1272 755 1285M682 1440L682 1345Q700 1300 770 1298Q820 1295 835 1340L865 1425L905 1420M978 1440Q980 1345 1070 1335Q1160 1345 1165 1440M995 1440Q1000 1370 1070 1365Q1130 1380 1140 1440",
        "M65 1268L185 1325M65 1268L80 1295Q35 1300 30 1325L75 1340Q40 1355 35 1390L85 1390Q65 1420 80 1435L175 1390M190 1330Q195 1290 215 1287Q260 1290 262 1335M165 1330L275 1340Q285 1355 275 1368L165 1360Q155 1345 165 1330ZM192 1335L190 1362M218 1337L217 1365M245 1340L243 1367M180 1368L165 1440M260 1370L255 1440M178 1400Q210 1415 257 1410",
        "M380 1375L410 1325L408 1300L510 1294L520 1318L565 1355L580 1440M380 1375L510 1380L565 1355M510 1380L520 1320L410 1325M380 1375L388 1440M508 1380L522 1440M530 1412L562 1398L565 1410L530 1428Z",
        "M180 880L240 868L242 845L258 845L258 862L315 855L315 880L282 888L275 925L262 960L300 985L295 1005L255 990L220 1028L210 1015L245 970L220 935L240 925L255 940L265 893L185 908ZM440 1095L470 1150L495 1088L522 1145L482 1165L495 1215L435 1238L460 1180L405 1190L410 1178L460 1155ZM488 1145L498 1125L500 1140ZM465 1185L475 1205L455 1212Z",
        "M0 520Q80 510 90 620Q70 590 60 610L112 690Q90 680 65 682L115 755Q80 775 0 720M20 560Q30 580 10 620Q20 660 38 680Q35 640 25 590M0 820L80 803L68 840L82 920Q80 935 65 935L0 950M0 855L40 850M0 892L28 888"
    ],
    words: [["A", 306, 1062, 1.1, -5]]
});

// middle right: bicycle, map, android, octopus, phone
sheet(482, 460, 3, 2.036, {
    dots: "379,66,18 423,29,12 209,111,11 923,50,14 989,29,10 899,96,15 1243,40,12 39,268,17 196,257,11 236,271,14 187,313,11 261,310,22 118,361,10 71,380,16 468,203,12 543,194,11 626,207,15 942,242,13 986,211,18 1212,203,11 1322,206,14 1410,210,10 1160,244,17 1067,293,14 1111,324,22 806,281,16 620,305,21 668,327,13 762,320,20 792,361,12 1157,372,13 1181,438,10 350,436,12 417,438,17 315,456,11 573,572,14 612,598,8 850,527,12 806,549,9 900,569,18 1030,583,12 1160,572,20 1204,595,10 1247,642,11 1000,632,12 940,625,21 860,615,17 890,648,10 513,652,12 525,680,8 130,640,18 181,653,13 249,684,22 338,672,10 384,676,13 142,696,12 93,722,11 75,779,11 543,766,12 548,808,23 1373,529,12 1418,551,14 159,997,22 232,986,11 115,1028,11 256,1028,12 141,1056,16 286,1076,17 236,1102,12 292,1151,14 51,1187,16 407,1241,12 437,1293,21 548,1149,13 730,1099,15 663,1281,11 707,1296,14 1082,1068,14 1115,1105,18 1181,1098,10 1083,1142,12 1092,1176,13 1158,1139,11 1318,1111,17 1328,1081,11 216,1360,13 189,1394,17 377,1500,11 419,1452,16 428,1531,12 488,1427,9 632,1528,12 716,1505,13 736,1546,17 972,1354,9 998,1396,18 520,98,98 520,98,78 819,180,98 819,180,78 300,801,90 300,801,32 300,801,6 207,1250,66 207,1250,38 885,1512,70 898,355,7 974,346,7 664,132,12 349,1139,6 325,1348,9 447,308,10 182,1225,6 200,1218,6 232,1222,6 252,1248,6 240,1275,6 210,1284,6 180,1278,6 163,1250,6 904,1502,20 904,1502,7",
    marks: [
        ["star", 105, 300, 1], ["star", 1075, 228, 1, -20], ["star", 750, 622, 1], ["star", 445, 738, 1, 10], ["star", 62, 838, 1, 10], ["star", 565, 1290, 1.3, 8], ["star", 512, 1505, 1.6, 8],
        ["sparkle", 690, 255, 0.8], ["sparkle", 220, 467, 1, 8], ["sparkle", 1142, 510, 1.1, 6], ["sparkle", 1282, 577, 1.1], ["cloud", 218, 387, 1], ["note", 547, 440, 1, 20], ["quotes", 675, 400, 1.2, 6], ["camera", 686, 515, 1, 4], ["camera", 945, 1165, 0.95, -8], ["pin", 1113, 617, 1, -10], ["pin", 1155, 880, 1.2, 12], ["bell", 1276, 482, 0.9, -20], ["bell", 1262, 1160, 1, 12], ["people", 1095, 130, 1.05], ["people", 695, 1195, 0.9], ["gear", 485, 1215, 1], ["person", 238, 1475, 1.1, 0], ["plane", 608, 652, 1, 30], ["bolt", 1240, 360, 1, -30], ["ticks", 1350, 645, 1], ["person", 1460, 930, 0.1]
    ],
    lines: [
        "M120 20Q120 45 180 60L265 92Q300 95 342 88Q330 60 275 35L230 15M270 85Q290 70 280 62Q310 65 300 50M155 55Q165 30 185 15M180 60Q190 35 205 20",
        "M520 100L630 35L640 110L625 125M520 100Q510 95 520 90L615 20M650 28L772 60L655 120ZM780 15Q850 50 876 40Q880 20 870 10M795 70Q820 50 840 45M795 70L822 175Q815 185 805 175L770 90L690 125M640 110Q620 150 640 155L618 160M655 170L670 155L690 150",
        "M200 165L240 150Q260 125 295 145L395 123Q410 130 400 140L300 160Q270 185 245 170L210 175Q198 175 200 165ZM220 210L320 185Q350 155 380 172L415 170Q425 180 415 188L385 195Q350 220 325 205L235 220Q218 220 220 210Z",
        "M305 260Q320 245 380 232L470 240L540 225Q550 225 552 235L585 360Q585 370 570 375L430 405L345 402Q335 400 335 390ZM337 370L440 345L562 290M340 382L450 355L568 305M512 332L560 375M525 325L580 368M440 310Q425 305 430 295Q445 285 470 298Q475 310 455 332Z",
        "M380 235L385 250M390 262L394 280M398 290L402 310M406 325L410 345M412 355L425 400M470 242L475 258M480 270L486 290M488 300L494 320M500 345L510 375",
        "M208 567Q250 500 275 490Q320 480 345 495Q370 470 400 475L500 495Q520 505 480 515Q430 540 345 555L208 567ZM222 585Q225 630 290 640Q420 665 495 590Q530 530 505 525Q460 570 400 575Q350 565 330 580Q270 575 222 585ZM312 550L320 565Q350 565 370 545L375 555Q410 552 428 540M335 600L345 585M390 603L388 590M438 588L425 575M370 535L375 550M400 520L395 535M350 545L345 530",
        "M850 380Q850 320 920 312Q1000 300 1034 355ZM862 322L840 312Q838 300 852 310L880 322M978 310L995 290Q1010 290 1005 310L998 325M862 402L1035 375L1070 475Q1070 482 1050 485L1030 490L1055 530Q1050 545 1020 538L990 490L972 490L985 540Q970 550 945 545L925 500L895 500ZM795 410Q810 392 840 405L862 480Q860 500 830 495Q800 450 795 410ZM1065 370Q1090 355 1108 370L1130 440Q1125 460 1098 455Q1070 420 1065 370Z",
        "M1205 275Q1215 245 1245 245L1290 280Q1290 300 1260 305L1215 290ZM1290 280L1434 370M1260 305L1420 400M1320 380Q1290 320 1434 320M1320 380L1390 430Q1400 480 1434 500M1255 250L1265 242M1270 258L1280 250M1282 265L1295 262M1203 285L1200 295M1220 298L1215 308M1240 305L1238 315",
        "M1310 20L1434 5M1310 20L1345 160Q1340 170 1325 168Q1310 165 1283 65Q1290 50 1318 55M1298 58L1325 158M1335 40L1434 25L1434 35L1340 48ZM1350 66L1434 52M1355 95L1434 80L1434 90L1358 100ZM1365 135L1434 120",
        "M160 720Q165 715 180 715L420 725M450 760L440 850Q440 870 425 870L165 860Q145 855 148 835L158 725M185 740L198 740L205 760L195 765L195 782L186 782L186 765L177 755ZM345 775Q360 770 400 800L415 835L410 850L400 845L395 805L355 790Z",
        "M580 700L545 625",
        "M780 1000Q670 880 700 680Q760 650 840 665Q870 680 890 740M1055 655Q1050 700 980 740M960 690Q1010 650 1055 655M865 770Q1000 800 940 960M480 975Q500 1000 580 1008Q600 970 625 990Q650 1000 665 1005M480 975Q500 1020 540 1010Q490 1080 560 1090Q650 1080 630 1055Q600 1045 615 1030Q680 1040 670 1080Q650 1130 580 1125Q565 1115 610 1105M680 970Q690 1030 760 1040Q850 1045 840 1080Q820 1095 770 1110Q750 1125 780 1125Q900 1110 890 1060Q870 1020 830 1005Q780 1000 780 975M900 970Q905 1020 930 1040Q1000 1050 1065 1005Q1060 1050 980 1075Q930 1090 885 1080M655 1040Q670 1015 690 1040M835 1040Q850 1015 870 1035M910 1045Q920 1025 945 1045M965 1045Q985 1025 1005 1045",
        "M290 1000Q285 990 300 988L410 970Q440 970 450 1005M290 1000L320 1060L345 1060L355 1070L400 1040L415 1035M335 1000L395 985Q405 990 395 998L345 1008ZM350 1018L400 1005Q405 1010 400 1015L360 1025ZM410 1035Q405 1020 425 1018L450 1028L440 1012L485 1022L470 1040L440 1042L450 1032L425 1040Z",
        "M315 1150Q340 1110 400 1105L420 1090L445 1102L485 1105Q480 1090 500 1088L505 1110L515 1125L490 1130L440 1135Q390 1170 325 1163ZM375 1115Q390 1140 380 1165M390 1140Q400 1125 430 1130L435 1138M1112 1000L1434 965M1112 1000L1135 1070Q1150 1078 1175 1075L1434 1045M1235 1000L1278 1015L1245 1030ZM1300 1005L1434 990M1170 1005Q1180 998 1190 1010L1195 1030Q1185 1040 1175 1025ZM1160 1025Q1180 1045 1205 1025M1185 1045L1188 1055",
        "M22 1295Q20 1270 60 1230Q150 1185 260 1188Q350 1200 352 1245Q350 1310 200 1318Q50 1320 22 1295ZM110 1170Q110 1155 130 1155L215 1153Q235 1160 235 1188M110 1170L125 1200M145 1155L138 1100Q145 1085 175 1085Q205 1090 195 1105Q175 1110 175 1120L180 1155M142 1110L175 1105M142 1125L175 1122M145 1140L178 1138",
        "M305 1330Q300 1328 295 1335L290 1380Q295 1390 305 1390L400 1394Q415 1395 420 1380L452 1388L455 1350L425 1360L425 1345Q420 1335 405 1335ZM330 1415L345 1415L342 1430L375 1435L378 1443L345 1450L340 1472L330 1470L325 1450L295 1450L295 1440L330 1432Z",
        "M540 1410Q540 1370 600 1350Q700 1330 740 1370Q740 1420 680 1450Q600 1475 550 1445ZM588 1400Q600 1370 650 1365Q700 1370 700 1390Q690 1420 640 1430Q590 1430 588 1400ZM540 1400L505 1390Q500 1375 530 1380L545 1388M630 1343Q630 1315 645 1320L655 1345M720 1350L770 1325M740 1375L780 1345M615 1465Q620 1495 640 1490L650 1462M730 1410L770 1415Q760 1430 710 1420M570 1370L600 1388M560 1430L595 1415M650 1343L645 1365M610 1465L625 1430M690 1350L680 1370M690 1440L670 1420",
        "M835 1340Q780 1370 795 1400Q840 1430 900 1415Q930 1390 915 1340M830 1350Q840 1370 865 1380M1050 1340L1065 1425Q1070 1440 1090 1438L1205 1425Q1220 1420 1215 1400L1200 1340M1225 1340L1242 1390Q1240 1415 1205 1425M1135 1435L1150 1465Q1165 1478 1178 1465L1168 1432M1085 1350L1108 1355L1085 1362M1165 1345L1145 1348L1165 1355M1110 1388L1160 1382M1122 1388Q1125 1405 1145 1403L1150 1385",
        "M790 1568L758 1475Q755 1462 775 1458L985 1422Q1010 1420 1020 1440L1062 1550M850 1525Q890 1530 930 1522Q920 1550 880 1550Q855 1545 850 1525ZM838 1512Q850 1500 870 1512M875 1530L880 1545M898 1528L900 1545M980 1550L990 1553L1010 1530M1010 1550L1028 1530",
        "M1275 1365Q1280 1345 1310 1350Q1350 1360 1434 1340M1275 1365L1285 1405L1270 1460Q1290 1485 1330 1475Q1370 1500 1434 1490M1150 1568Q1160 1545 1195 1555Q1250 1530 1310 1535L1340 1525Q1360 1540 1355 1568M1085 1495Q1090 1475 1108 1472Q1115 1490 1100 1502Q1085 1505 1085 1495ZM1220 1490Q1225 1475 1232 1468L1255 1495Q1245 1508 1220 1490ZM1295 1480L1320 1498Q1310 1510 1298 1505Z",
        "M38 1440L35 1370Q45 1355 60 1362L85 1430L98 1365Q115 1350 132 1365L128 1460Q150 1500 130 1525Q90 1550 20 1530L0 1500M0 1415Q20 1405 45 1425Q55 1445 30 1452Q10 1450 8 1440M55 1475Q20 1470 40 1455Q90 1440 115 1460M70 1478Q80 1475 90 1495"
    ]
});

// bottom left: leaf, dog, laptop
sheet(-18, 950, 2.8, 3, {
    dots: "310,28,12 282,163,9 302,246,14 94,279,19 158,275,11 184,307,12 502,350,16 528,305,9 571,316,13 618,317,16 635,264,16 787,238,11 831,224,12 875,190,13 928,194,17 808,285,13 788,338,11 876,347,14 652,380,12 711,433,12 809,505,17 832,547,11 654,591,10 446,537,16 272,531,9 471,622,12 285,638,13 538,632,16 531,691,21 568,734,14 471,751,13 698,637,15 667,670,13 990,735,17 972,797,20 1018,826,12 937,839,12 942,888,12 1246,110,19 1250,182,10 1232,43,12 1221,262,9 1327,273,21 1382,271,12 1447,278,16 1321,348,12 1364,311,9 1380,534,12 1343,564,12 1374,587,9 1370,837,15 1347,903,19 1295,928,14 1328,990,10 1052,998,16 1517,866,16 1538,992,12 192,830,20 321,873,9 554,894,16 328,940,16 58,1057,10 98,1089,19 164,1063,20 231,1066,9 136,1128,9 213,1142,15 283,1116,17 158,1185,14 350,1312,14 422,1355,16 1449,1312,9 1368,1350,19 1523,1338,13 113,388,63 1064,38,70 1248,668,20 963,1121,10 992,1131,10 854,678,6 887,655,5 1382,136,14",
    marks: [
        ["star", 915, 282, 1, 10], ["star", 724, 548, 1.3, 2], ["star", 994, 640, 0.9, 2], ["star", 68, 815, 1, 10], ["star", 235, 957, 1, 10], ["star", 375, 1167, 1, 18], ["sparkle", 345, 122, 1], ["sparkle", 296, 745, 0.8, 6], ["sparkle", 1268, 1040, 0.8], ["heart", 545, 810, 1.2], ["heart", 1113, 475, 0.8], ["heart", 1288, 1298, 1.2], ["bolt", 715, 300, 1.1, 15], ["note", 800, 405, 0.8, 20], ["cloud", 255, 1270, 1], ["mic", 80, 1245, 1, -4], ["pencil", 1000, 940, 1], ["phone", 663, 1127, 1], ["bell", 365, 1030, 0.9], ["arrow", 265, 405, 1, -70], ["arrow", 1440, 930, 1.1, 15],
        ["drop", 368, 805, 1.3], ["drop", 438, 838, 1.4, -14], ["drop", 388, 902, 0.8, 10], ["drop", 372, 612, 1.1]
    ],
    lines: [
        "M322 295L435 308Q470 335 440 390Q400 430 340 437Q320 400 335 350ZM350 325L445 432M372 345L375 372L350 375M405 345L398 390L360 395M425 400L400 405M95 410L88 355L142 385L120 390L135 425L122 430L108 395Z",
        "M370 245Q350 210 400 170Q500 130 600 138Q650 150 632 200Q600 250 480 270Q390 285 370 245ZM430 222Q425 180 445 165Q450 190 440 220ZM482 212Q475 170 492 152Q495 180 488 212ZM535 198Q530 160 550 138Q560 170 542 195Z",
        "M388 0L405 95Q410 105 430 105L528 108L585 65L575 0M515 0L530 108M442 8Q425 35 430 50Q445 70 458 50Q460 30 442 8ZM528 15L555 0M683 0L685 65Q705 70 750 60L830 38Q880 20 862 0M658 80L680 65M658 80L672 150Q680 165 705 158M685 60L708 165Q720 185 745 185L880 135Q905 120 900 95L880 20M880 10Q905 0 910 20L920 75Q915 90 902 90M740 45Q750 40 760 55L758 78Q745 85 740 60ZM818 25Q828 15 838 40Q835 60 822 55Z",
        "M980 15L1010 220Q1020 250 1045 248L1190 215Q1200 170 1160 0M985 100Q960 120 970 180L985 195M1132 90Q1150 60 1175 75L1200 160Q1195 195 1160 180Q1135 130 1132 90ZM1160 185L1170 200Q1195 200 1198 175M985 195L992 210L1005 218M1020 22Q1030 10 1045 28M1062 20Q1080 5 1090 22M1042 42Q1060 75 1075 42M1068 248L1078 270L1048 285Q1045 305 1065 305L1155 292L1150 235M1100 242L1105 268Q1090 290 1100 298M1112 240L1118 262Q1130 265 1125 242",
        "M1375 115Q1330 80 1345 50Q1400 30 1402 65L1395 115Q1430 60 1450 75Q1480 110 1400 138Q1470 155 1450 190Q1430 210 1390 155Q1400 210 1375 222Q1330 225 1350 175L1370 142Q1300 165 1297 130Q1305 90 1375 115ZM1345 110L1375 130M1390 100L1385 125M1415 122L1395 134M1408 160L1392 145M1370 170L1378 145",
        "M442 455L600 390Q615 388 618 398L652 500Q655 512 640 518L520 568Q505 572 500 560L472 485ZM512 475L590 442Q600 445 592 458L522 487Q508 485 512 475ZM525 508L590 478Q600 482 592 492L535 518Q522 518 525 508ZM338 490L362 485L372 508M338 490L340 512M320 550Q320 505 360 505Q395 510 402 545L432 700Q435 715 350 732ZM350 725L432 708",
        "M885 480Q880 440 935 380Q1000 340 1050 380Q1100 385 1095 415Q1080 432 1040 430Q1005 450 1025 495L1105 535Q1130 560 1105 570L955 560Q945 600 915 585Q860 540 855 500Q860 475 885 480ZM980 415Q1000 380 1050 382M1105 420Q1100 400 1130 375Q1190 350 1240 400M1125 375Q1150 320 1220 328Q1290 370 1315 440Q1350 430 1355 460Q1340 520 1290 542Q1265 540 1265 512L1230 525Q1180 570 1145 560Q1120 540 1160 515Q1215 490 1208 440Q1195 405 1160 408Q1125 430 1105 420Z",
        "M612 580Q590 600 593 650Q600 720 645 770Q625 830 640 890Q655 915 685 912Q740 905 738 885Q725 868 705 870Q710 850 685 835Q675 850 685 880L705 880M612 580L612 640Q620 720 720 730M720 700Q730 660 785 658Q805 690 802 775Q760 790 720 725ZM735 665Q760 610 830 612Q900 625 922 690Q925 740 890 750L802 768M810 608Q850 590 880 630M875 755Q875 800 855 860Q890 860 885 895Q860 910 825 908Q780 900 782 835M705 850Q740 858 782 855M825 840L828 870Q840 890 862 890M885 690Q895 680 905 688L895 700ZM895 700L898 715L885 718M898 715L910 712",
        "M1055 680Q1050 665 1065 658L1280 598Q1295 598 1298 612L1332 765Q1332 780 1320 782L1112 840Q1098 842 1092 830ZM1080 685L1275 627L1305 760L1115 815ZM1110 805L1160 725Q1175 710 1185 720L1270 765M1220 735Q1240 700 1295 720M1165 628L1215 578Q1230 570 1265 600M1060 720Q1035 750 1062 790M1318 680Q1345 700 1328 735M1125 840L1150 875Q1165 882 1180 868L1235 812",
        "M1440 650L1432 555Q1435 530 1455 535Q1470 540 1480 640L1492 555Q1505 530 1522 550L1510 670Q1550 740 1520 780Q1480 805 1430 795Q1400 780 1395 690M1378 650Q1375 630 1395 632L1412 680Q1400 690 1385 680ZM1408 620Q1430 605 1440 640Q1450 670 1430 672ZM1435 705Q1420 685 1445 680L1480 665M1475 700Q1475 720 1487 735",
        "M1190 940Q1190 910 1208 910Q1215 930 1190 950Q1140 900 1110 930Q1085 970 1125 1030Q1170 1060 1215 1020Q1240 960 1190 950",
        "M455 970Q460 945 485 942L860 985Q880 990 880 1010L858 1315M455 970L438 1270M475 985Q480 978 490 980L840 1018Q855 1020 852 1035L832 1275Q828 1280 815 1278L470 1240Q458 1238 460 1225ZM378 1265L590 1285L595 1302L718 1315L725 1302L925 1325Q915 1370 890 1365L410 1320Q375 1300 378 1265Z",
        "M1080 1075Q1000 1050 940 1085Q900 1130 925 1200Q950 1230 1025 1228Q1020 1275 960 1270Q930 1270 930 1290L945 1302L985 1318L960 1365M1060 1065Q1075 1040 1095 1045M952 1170Q970 1185 1002 1182Q990 1210 965 1200ZM1130 1312Q1080 1275 1035 1288Q1015 1320 1045 1330L1072 1328M1165 1262L1185 1275L1170 1295L1185 1305L1168 1320L1185 1335L1165 1365M1400 1050L1500 1002L1525 1050M1490 1360Q1490 1280 1568 1265M1505 1350Q1510 1300 1568 1280",
        "M18 890L160 878L148 918L152 990Q150 1000 140 1002L18 1018Q5 1018 3 1008L0 905ZM28 920L115 915Q125 920 118 930L30 940Q20 935 28 920ZM32 960L95 955Q105 960 98 968L35 975Q25 970 32 960Z",
        "M440 130",
        "M1425 400Q1430 340 1568 290M1425 400Q1440 470 1568 470M1500 255Q1500 240 1530 235L1568 232M1500 255L1512 300M1380 360Q1385 345 1400 355L1405 400Q1380 390 1380 360ZM1395 410L1420 405L1418 425L1398 432ZM1402 435Q1395 480 1415 485Q1430 470 1410 430M1530 140L1535 235M1530 140L1568 130",
        "M200 0L255 0L240 210Q235 218 190 215M200 32Q205 22 220 30L220 48L198 48M200 72L245 72M198 105Q205 95 215 110L212 125L195 125M195 178L240 180"
    ]
});

// octopus, sneaker and the right edge
sheet(500, 750, 2.8, 3, {
    dots: "1536,400,20 1400,549,8 1388,590,9 1495,878,20 1400,964,12 1413,1015,21 1232,997,14 1379,1073,13 1190,1074,12 1128,1079,8 1165,1015,22 1105,1012,18 968,861,13 971,925,16 1017,960,8 1545,247,14 1311,450,13 1270,412,13 1218,396,12 1218,464,20 1148,409,14 1241,343,9 1440,168,16 1487,188,13 1104,183,12 1295,126,12 1534,119,23 950,296,17 997,202,64 793,269,9 796,324,13 769,344,8 804,369,8 441,326,17 456,260,13 714,141,9 740,168,10 698,176,8 1163,238,8 1191,231,8 1218,223,8 848,1058,11 919,1054,13 898,1099,9 856,1126,10 596,1040,13 569,1018,11 35,498,15 258,511,21 318,496,9 207,530,11 165,583,11 98,600,20 1512,988,60",
    marks: [["star", 1318, 1010, 1.1], ["sparkle", 880, 957, 1, 40], ["heart", 127, 505, 1.1, 12], ["profile", 1406, 320], ["star", 1400, 1135, 1, 20], ["star", 1465, 1410, 1, 10], ["speech", 285, 605, 0.5, 0]],
    lines: [
        "M595 350L570 220Q575 110 680 100Q750 105 785 180L825 310L845 370M590 265L765 210Q775 215 768 280Q750 310 710 295L690 265Q680 265 675 300Q650 335 615 320ZM615 275L665 255Q675 270 665 300Q640 320 620 305ZM700 245L750 228Q760 240 752 275Q735 295 710 280ZM695 345L718 328Q722 355 705 358Q695 355 695 345Z",
        "M785 180L860 145Q900 100 935 95Q930 150 850 200Q820 240 825 290Q850 380 800 420Q770 500 820 535Q870 560 900 530Q850 530 848 490Q845 440 900 390Q940 310 900 255Q880 240 830 242M865 440Q920 490 960 460Q985 440 965 380Q960 330 1005 310Q990 360 1015 400Q1035 500 980 550Q920 590 800 555M505 242Q560 270 548 305Q530 340 540 370Q560 400 595 360Q610 450 550 500Q490 540 440 500Q430 470 495 400Q535 360 510 300M510 298Q490 350 430 385Q360 430 375 500Q390 590 470 610Q550 620 590 603M388 400Q420 410 412 435L390 440M375 500Q405 500 400 535L385 540M415 580Q440 560 460 600M498 610Q515 570 545 608M500 405Q530 420 510 445M515 455Q540 430 562 475M630 480Q570 520 600 620M708 515Q680 560 720 620M700 560Q670 570 678 600L700 610M800 530Q780 600 805 625M880 390Q890 350 920 358M845 440Q840 410 870 412M1010 430Q985 450 1015 475M970 520Q985 500 1005 520M898 572Q910 530 945 565",
        "M960 155Q990 180 1040 240M940 215Q990 200 1040 165M1000 140L990 265M955 250Q970 200 985 140",
        "M1042 325L1105 305Q1120 290 1118 275L1105 240L1265 195Q1290 200 1288 225L1100 390Q1080 400 1072 385L1045 345ZM1072 372L1240 255Q1270 240 1280 210M1105 240L1110 270L1122 272Q1130 245 1145 235M1235 205Q1230 230 1250 240M1228 262L1238 272",
        "M985 600Q985 580 1005 578L1358 505L1342 540L1358 625M1165 612L1312 580M1100 602L1142 618L1108 628M1468 458L1568 505M1468 458L1480 485Q1435 490 1430 515L1478 535Q1440 550 1435 580L1485 580Q1465 610 1480 625L1568 580",
        "M692 960Q745 975 725 1045Q690 1020 692 960ZM725 1045Q725 980 768 950Q790 1000 725 1050ZM728 1050Q770 990 808 1000Q810 1050 750 1058ZM720 1050Q710 1100 760 1160M735 1110Q760 1065 800 1100Q810 1140 800 1165M690 1165Q685 1120 725 1118Q740 1135 735 1165",
        "M220 1150L235 1090Q245 1085 340 1098L348 1122L375 1120L370 1160",
        "M1210 865L1375 870L1460 840M1215 862Q1210 850 1240 850L1400 845L1455 832M1215 880Q1230 905 1250 890Q1280 880 1300 900L1330 890L1350 900L1380 885L1440 870M1240 905Q1240 935 1270 938L1400 910Q1440 890 1445 860M1490 1015L1498 950L1542 985L1520 990L1532 1025L1520 1030L1508 1000Z",
        "M930 1165L930 1100Q955 1095 950 1065Q975 1050 960 1018Q1050 1000 1080 1090L1100 1165M1010 1015Q1050 1020 1085 1165M962 1118L985 1128L962 1138M1035 1105L1015 1112L1035 1120M1148 1165Q1145 1130 1165 1132L1190 1145Q1260 1090 1310 1120Q1335 1140 1330 1165M1475 1160L1490 1105Q1505 1100 1515 1125L1545 1145M1435 1070Q1440 1060 1470 1090Q1450 1090 1435 1070Z",
        "M1025 1440Q1020 1410 1060 1425L1150 1405L1185 1375Q1210 1380 1205 1410L1220 1440M1285 1390Q1320 1400 1320 1440"
    ]
});

// bottom right
sheet(542, 1200, 3, 3, {
    dots: "248,37,12 453,31 491,61 555,57,17 11,151,20 30,227,14 922,33,11 1229,361,20 1171,378,14 1203,456,13 1217,496,13 1180,511 1026,517,28 1134,556,27 814,538,16 526,534,10 151,555,11 340,580 267,592,18 209,607 825,607,10 705,0,70 170,180,80 140,165,14 205,155,14 1070,150,10 1130,145,10 390,330,14 700,330,12 560,380,10 870,300,12",
    marks: [["star", 60, 290, 1.1, 14], ["star", 330, 25, 1.2], ["heart", 140, 160, 0.9], ["heart", 200, 150, 0.9], ["heart", 520, 440, 1], ["cloud", 650, 470, 1], ["star", 700, 220, 1.1, 8], ["sparkle", 350, 380, 1], ["drop", 860, 400, 1], ["pencil", 60, 520, 1], ["sparkle", 900, 500, 0.9]],
    lines: [
        "M970 85Q970 60 1000 70L1090 45L1150 25Q1180 30 1170 75Q1190 150 1130 190Q1020 210 980 150ZM1080 165Q1100 185 1120 160M330 100L500 90Q520 92 518 110L520 250Q515 265 500 262L360 270L320 295L325 260L312 115Q315 102 330 100Z",
        "M130 215Q170 240 220 200Q225 250 175 245Q145 245 130 215ZM235 545L260 470Q300 440 340 495L355 515L320 530L300 510L270 545ZM0 480L60 500Q110 530 100 590L90 610M60 500L55 545L0 550",
        "M450 550Q425 560 435 570L458 584Q475 580 468 570ZM412 592L460 596L458 606L412 604ZM515 610Q600 560 720 547Q780 560 785 610M580 610L605 605M665 590L685 582M680 610L690 590M710 578L728 572M715 608L740 602M745 575L752 595M702 538L728 532",
        "M870 545Q880 520 950 480L1040 440Q1180 400 1230 420L1254 440M870 545Q870 600 930 605Q980 590 1010 570Q1060 560 1110 605M975 610Q1010 580 1060 610"
    ],
    words: [["Hi", 360, 235, 1.1]]
});
```
